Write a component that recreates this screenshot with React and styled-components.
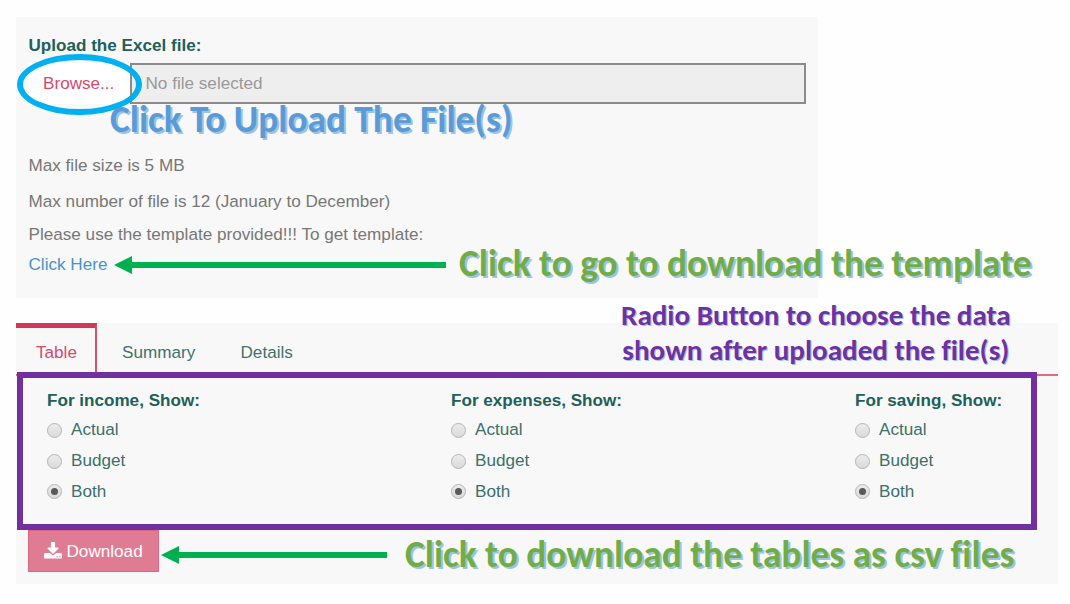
import React from "react";
import styled, { createGlobalStyle } from "styled-components";

const GlobalStyle = createGlobalStyle`
  * { box-sizing: border-box; }
  body {
    margin: 0;
    background: #fefefe;
    font: 17.14px/24px "Liberation Sans", Arial, sans-serif;
    color: #777;
  }
`;

const Page = styled.main`
  position: relative;
  display: flex;
  flex-direction: column;
  gap: 25px;
  width: 1070px;
  height: 604px;
  padding: 17px 12px 0 16px;
  overflow: hidden;
`;

const UploadPanel = styled.section`
  width: 802px;
  height: 281px;
  padding: 17px 12px 0 12.5px;
  background: #f8f8f8;
`;

const Label = styled.div`
  height: 24px;
  color: #20605a;
  font-weight: 700;
  font-size: 17.1px;
  white-space: nowrap;
`;

const FileInput = styled.div`
  display: flex;
  height: 41px;
  margin-top: 5px;
`;

const BrowseButton = styled.button`
  width: 101px;
  padding: 0 0 1px 14.5px;
  border: 0;
  background: #fff;
  color: #d64a6a;
  font: inherit;
  text-align: left;
`;

const FileName = styled.div`
  flex: 1;
  padding: 6px 14px;
  border: 2px solid #8b8b8b;
  background: #eee;
  color: #999;
`;

const Notes = styled.div`
  display: flex;
  flex-direction: column;
  padding-top: 49px;
`;

const Note = styled.p`
  height: 24px;
  margin: 0 0 ${(p) => p.$gap}px;
`;

const Link = styled.a`
  height: 24px;
  color: #4a92c8;
`;

const ResultsPanel = styled.section`
  display: flex;
  flex-direction: column;
  height: 261px;
  background: #f8f8f8;
`;

const Tabs = styled.nav`
  display: flex;
  height: 53px;
  border-bottom: 2px solid #df6b84;
`;

const Tab = styled.div`
  width: ${(p) => p.$width}px;
  height: 53px;
  padding: ${(p) => (p.$active ? 12 : 17)}px 0 0 ${(p) => p.$inset}px;
  border-top: ${(p) => (p.$active ? "5px solid #d1375a" : "0")};
  border-right: ${(p) => (p.$active ? "2px solid #d9506e" : "0")};
  color: ${(p) => (p.$active ? "#d64a6a" : "#41736d")};
`;

const Filters = styled.div`
  display: grid;
  grid-template-columns: 404px 404px 1fr;
  height: 154px;
  padding: 13px 0 0 31px;
`;

const Group = styled.div`
  display: flex;
  flex-direction: column;
`;

const Option = styled.div`
  display: flex;
  align-items: center;
  gap: 9.5px;
  height: 30.7px;
  color: #3c706a;
`;

const OptionList = styled.div`
  padding-top: 1px;
`;

const Radio = styled.span`
  display: grid;
  place-items: center;
  width: 15px;
  height: 15px;
  margin: 2px 0 0 -0.5px;
  border: 1px solid #b5b5b5;
  border-radius: 50%;
  background: linear-gradient(#ececec, #dadada);

  &::after {
    content: "";
    width: 7px;
    height: 7px;
    border-radius: 50%;
    background: ${(p) => (p.$checked ? "#5a5a5a" : "transparent")};
  }
`;

const DownloadButton = styled.button`
  display: flex;
  align-items: center;
  gap: 4.5px;
  width: 131px;
  height: 42px;
  margin-left: 12px;
  padding: 0 0 1px 15px;
  border: 1px solid #db6883;
  background: #df7c94;
  color: #fff;
  font: inherit;
`;

const Highlight = styled.div`
  position: absolute;
  left: 17px;
  top: 372px;
  width: 1020px;
  height: 158px;
  border: 6px solid #7030a0;
`;

const Ring = styled.div`
  position: absolute;
  left: 17px;
  top: 54px;
  width: 125px;
  height: 61px;
  border: 6px solid #00b0f0;
  border-radius: 50%;
`;

const Callout = styled.div`
  position: absolute;
  left: ${(p) => p.$x}px;
  top: ${(p) => p.$y}px;
  color: ${(p) => p.$color};
  font: 700 ${(p) => p.$size}px/${(p) => p.$line || 44}px Carlito, Calibri, Lato, sans-serif;
  font-variant-ligatures: none;
  text-align: center;
  text-shadow: ${(p) => p.$shadow || "2px 2px 0 #9dc3e6"};
  white-space: nowrap;
`;

const ArrowSvg = styled.svg`
  position: absolute;
  left: ${(p) => p.$x}px;
  top: ${(p) => p.$y}px;
`;

function Arrow({ x, y, length }) {
  return (
    <ArrowSvg $x={x} $y={y} width={length} height="18" viewBox={`0 0 ${length} 18`}>
      <path d={`M0 9 18 0V6H${length}V12H18V18Z`} fill="#00b050" />
    </ArrowSvg>
  );
}

function DownloadIcon() {
  return (
    <svg width="18" height="18" viewBox="0 0 1664 1664" fill="currentColor">
      <path d="M1280 1344q0-26-19-45t-45-19-45 19-19 45 19 45 45 19 45-19 19-45zm256 0q0-26-19-45t-45-19-45 19-19 45 19 45 45 19 45-19 19-45zm128-224v320q0 40-28 68t-68 28h-1472q-40 0-68-28t-28-68v-320q0-40 28-68t68-28h465l135 136q58 56 136 56t136-56l136-136h464q40 0 68 28t28 68zm-325-569q17 41-14 70l-448 448q-18 19-45 19t-45-19l-448-448q-31-29-14-70 17-39 59-39h256v-448q0-26 19-45t45-19h256q26 0 45 19t19 45v448h256q42 0 59 39z" />
    </svg>
  );
}

function RadioGroup({ title }) {
  return (
    <Group>
      <Label>{title}</Label>
      <OptionList>
        {["Actual", "Budget", "Both"].map((name) => (
          <Option key={name}>
            <Radio $checked={name === "Both"} />
            {name}
          </Option>
        ))}
      </OptionList>
    </Group>
  );
}

export default function App() {
  return (
    <Page>
      <GlobalStyle />
      <UploadPanel>
        <Label>Upload the Excel file:</Label>
        <FileInput>
          <BrowseButton>Browse...</BrowseButton>
          <FileName>No file selected</FileName>
        </FileInput>
        <Notes>
          <Note $gap={12}>Max file size is 5 MB</Note>
          <Note $gap={9}>Max number of file is 12 (January to December)</Note>
          <Note $gap={6}>Please use the template provided!!! To get template:</Note>
          <Link>Click Here</Link>
        </Notes>
      </UploadPanel>

      <ResultsPanel>
        <Tabs>
          <Tab $active $width={81} $inset={20}>Table</Tab>
          <Tab $width={118} $inset={25}>Summary</Tab>
          <Tab $width={118} $inset={25.5}>Details</Tab>
        </Tabs>
        <Filters>
          <RadioGroup title="For income, Show:" />
          <RadioGroup title="For expenses, Show:" />
          <RadioGroup title="For saving, Show:" />
        </Filters>
        <DownloadButton>
          <DownloadIcon />
          Download
        </DownloadButton>
      </ResultsPanel>

      <Ring />
      <Highlight />
      <Arrow x={114} y={256} length={332} />
      <Arrow x={161} y={546} length={226} />
      <Callout $x={110} $y={97} $size={37.33} $color="#5b9bd5">Click To Upload The File(s)</Callout>
      <Callout $x={459} $y={241} $size={37.33} $color="#70ad47">Click to go to download the template</Callout>
      <Callout $x={405} $y={532} $size={37.33} $color="#70ad47">Click to download the tables as csv files</Callout>
      <Callout $x={621} $y={298} $size={29.1} $line={35} $color="#7030a0" $shadow="1px 1px 0 #9dc3e6">
        Radio Button to choose the data
        <br />
        shown after uploaded the file(s)
      </Callout>
    </Page>
  );
}
